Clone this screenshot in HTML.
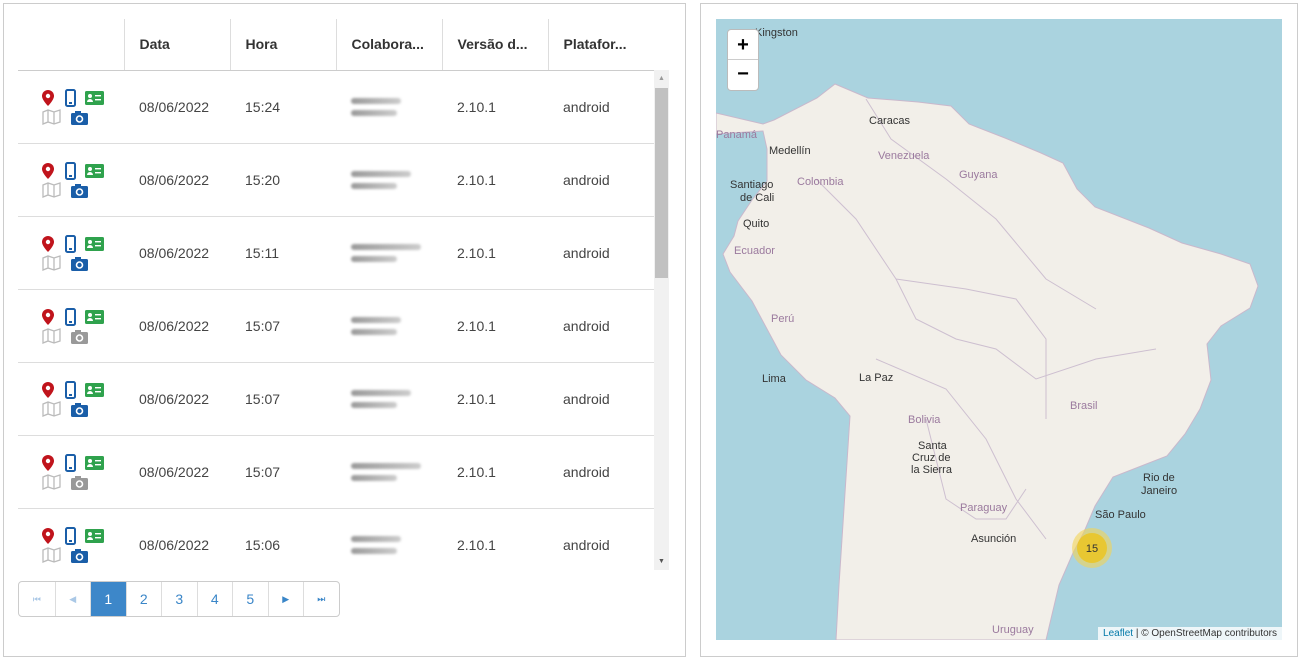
<!DOCTYPE html>
<html><head><meta charset="utf-8"><style>
*{box-sizing:border-box;margin:0;padding:0}
body{width:1300px;height:659px;background:#fff;font-family:"Liberation Sans",sans-serif;color:#333;position:relative;overflow:hidden}
.panel{position:absolute;border:1px solid #ccc;background:#fff}
table{position:absolute;left:18px;top:19px;border-collapse:collapse;width:636px;font-size:14px;table-layout:fixed}
th{height:51px;text-align:left;padding-left:15px;font-weight:bold;color:#333;border-left:1px solid #ddd;border-bottom:1px solid #ccc;font-size:14px;width:106px}
th:first-child{border-left:none}
td{height:73px;padding-left:15px;border-bottom:1px solid #ddd;color:#444}
tr:last-child td{border-bottom:none}
.ic{position:relative;padding:0}
.blur{display:block;height:6px;background:linear-gradient(90deg,#999,#ccc);border-radius:3px;filter:blur(1.2px);margin:6px 0}
.pg{position:absolute;left:18px;top:581px;display:flex;border:1px solid #ccc;border-radius:4px;overflow:hidden}
.pg div{width:35.5px;height:34px;border-left:1px solid #ddd;display:flex;align-items:center;justify-content:center;color:#3a86c8;font-size:14px}
.pg div:first-child{border-left:none}
.pg .a{background:#3d87c9;color:#fff}
.pg .d{color:#aac8e6}
.pg .s{font-size:9px}
</style></head><body>
<div class="panel" style="left:3px;top:3px;width:683px;height:654px"></div>
<div class="panel" style="left:700px;top:3px;width:598px;height:654px"></div>
<table>
<tr><th></th><th>Data</th><th>Hora</th><th>Colabora...</th><th>Versão d...</th><th>Platafor...</th></tr>
</table>
<script>
var cams=['#1a5ea8','#1a5ea8','#1a5ea8','#999','#1a5ea8','#999','#1a5ea8'];
var hrs=['15:24','15:20','15:11','15:07','15:07','15:07','15:06'];
var h='';
for(var i=0;i<7;i++){
h+='<tr><td class="ic"><svg width="106" height="72" style="position:absolute;left:0;top:0"><g transform="translate(0,8)">'+
'<path d="M24 17a6 6 0 0 1 12 0c0 4-6 10-6 10s-6-6-6-10z" fill="#c0141c"/><circle cx="30" cy="17" r="2.2" fill="#fff"/>'+
'<rect x="48" y="11" width="9" height="16" rx="1.5" fill="none" stroke="#1a5ea8" stroke-width="2"/><rect x="51" y="23" width="3" height="2" fill="#1a5ea8"/>'+
'<rect x="67" y="12" width="19" height="14" rx="1.5" fill="#2fa24d"/><circle cx="72" cy="17" r="2" fill="#fff"/><path d="M69 23a3 3 0 0 1 6 0z" fill="#fff"/><rect x="77" y="16" width="6" height="1.4" fill="#fff"/><rect x="77" y="20" width="6" height="1.4" fill="#fff"/>'+
'<path d="M25 33l5-2 6 2 6-2v12l-6 2-6-2-5 2z M30 31v12 M36 33v12" fill="none" stroke="#bbb" stroke-width="1.3"/>'+
'<rect x="53" y="34" width="17" height="12" rx="1.5" fill="'+cams[i]+'"/><rect x="57" y="32" width="6" height="3" fill="'+cams[i]+'"/><circle cx="61.5" cy="40" r="3" fill="none" stroke="#fff" stroke-width="1.6"/>'+
'</g></svg></td><td>08/06/2022</td><td>'+hrs[i]+'</td><td><span class="blur" style="width:'+(50+i%3*10)+'px"></span><span class="blur" style="width:46px"></span></td><td>2.10.1</td><td>android</td></tr>';
}
document.querySelector('table').insertAdjacentHTML('beforeend',h);
</script>
<div style="position:absolute;left:654px;top:70px;width:15px;height:500px;background:#f1f1f1"></div>
<div style="position:absolute;left:655px;top:88px;width:13px;height:190px;background:#c1c1c1"></div>
<div style="position:absolute;left:658px;top:75px;font-size:7px;color:#999">▲</div>
<div style="position:absolute;left:658px;top:558px;font-size:7px;color:#555">▼</div>
<div class="pg"><div class="d s">⏮</div><div class="d s">◀</div><div class="a">1</div><div>2</div><div>3</div><div>4</div><div>5</div><div class="s">▶</div><div class="s">⏭</div></div>

<div style="position:absolute;left:716px;top:19px;width:566px;height:621px;background:#aad3df;overflow:hidden">
<svg width="566" height="621" style="position:absolute;left:0;top:0">
<path d="M0 94L47 105L58 101L101 79L119 65L152 79L202 83L235 87L253 105L289 119L325 134L347 144L361 170L379 188L433 209L466 224L505 235L534 245L542 267L534 289L505 307L491 325L495 361L484 390L469 415L451 437L397 458L379 487L368 513L357 534L343 566L330 621L120 621L123 566L134 397L119 379L90 361L65 336L51 310L36 282L14 253L7 235L18 217L22 202L36 181L51 162L51 130L47 112L0 115Z" fill="#f2efe9" stroke="#c9b8cc" stroke-width="1"/>
<path d="M150 80L175 120L230 160L280 200L330 260L380 290M100 160L140 200L180 260L200 300L240 320L280 330L320 360L380 340L440 330M180 260L250 270L300 280L330 320L330 400M160 340L230 370L270 420L300 480L330 520M210 400L230 480L260 500L290 500L310 470" fill="none" stroke="#cdbfd0" stroke-width="1"/>
<g font-family="Liberation Sans,sans-serif" font-size="11" fill="#333">
<text x="39" y="17">Kingston</text><text x="153" y="105">Caracas</text><text x="0" y="119" fill="#9b7a9e">Panamá</text><text x="53" y="135">Medellín</text><text x="162" y="140" fill="#9b7a9e">Venezuela</text><text x="243" y="159" fill="#9b7a9e">Guyana</text><text x="14" y="169">Santiago</text><text x="24" y="182">de Cali</text><text x="81" y="166" fill="#9b7a9e">Colombia</text><text x="27" y="208">Quito</text><text x="18" y="235" fill="#9b7a9e">Ecuador</text><text x="55" y="303" fill="#9b7a9e">Perú</text><text x="46" y="363">Lima</text><text x="143" y="362">La Paz</text><text x="192" y="404" fill="#9b7a9e">Bolivia</text><text x="354" y="390" fill="#9b7a9e">Brasil</text><text x="202" y="430">Santa</text><text x="196" y="442">Cruz de</text><text x="195" y="454">la Sierra</text><text x="427" y="462">Rio de</text><text x="425" y="475">Janeiro</text><text x="244" y="492" fill="#9b7a9e">Paraguay</text><text x="379" y="499">São Paulo</text><text x="255" y="523">Asunción</text><text x="276" y="614" fill="#9b7a9e">Uruguay</text>
</g>
<circle cx="376" cy="529" r="20" fill="#f1d357" opacity=".6"/><circle cx="376" cy="529" r="15" fill="#f0c20c" opacity=".7"/>
<text x="376" y="533" font-family="Liberation Sans,sans-serif" font-size="11" text-anchor="middle" fill="#333">15</text>
</svg>
<div style="position:absolute;left:11px;top:10px;width:32px;height:62px;background:#fff;border:1px solid #bbb;border-radius:4px">
<div style="height:30px;border-bottom:1px solid #ccc;text-align:center;font:bold 20px/30px 'Liberation Sans';color:#000">+</div>
<div style="height:30px;text-align:center;font:bold 20px/28px 'Liberation Sans';color:#000">−</div></div>
<div style="position:absolute;right:0;bottom:0;background:rgba(255,255,255,.8);font-size:10px;padding:1px 5px;color:#333"><span style="color:#0078a8">Leaflet</span> | © OpenStreetMap contributors</div>
</div>
</body></html>
